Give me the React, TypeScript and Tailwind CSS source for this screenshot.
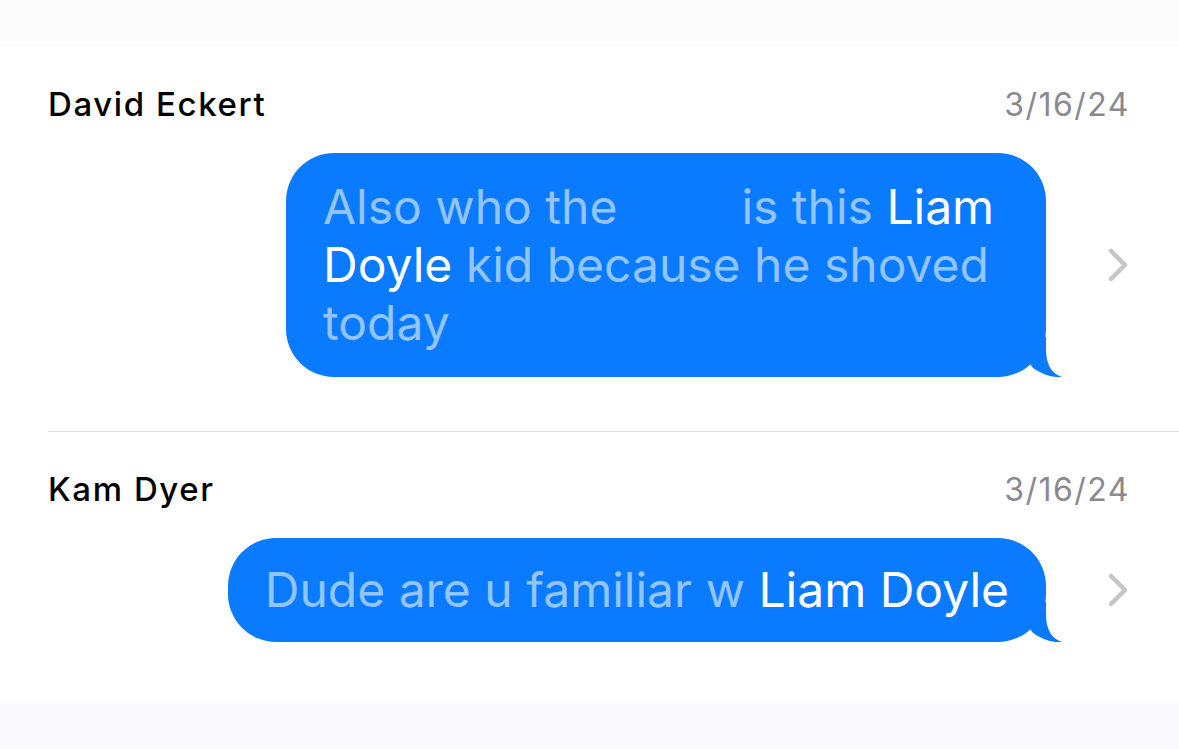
import React from "react";

const light = "text-[#92c4ff]";

function Chevron() {
  return (
    <svg width="24" height="36" viewBox="0 0 24 36" className="shrink-0">
      <path
        d="M5 4 L19 18 L5 32"
        fill="none"
        stroke="#c6c6c9"
        strokeWidth="4.5"
        strokeLinecap="round"
        strokeLinejoin="round"
      />
    </svg>
  );
}

function Tail() {
  return (
    <svg
      width="40"
      height="40"
      viewBox="0 0 40 40"
      className="absolute right-[-16px] bottom-0"
    >
      <path
        d="M24 0 L24 12 C24 28 30 37 40 40 C32 41 20 38 10 30 L0 10 L0 0 Z"
        fill="#0a7aff"
      />
    </svg>
  );
}

function Bubble({ children, className }: { children: React.ReactNode; className: string }) {
  return (
    <div className={`relative bg-[#0a7aff] rounded-[48px] text-[48px] leading-[58px] ${className}`}>
      {children}
      <Tail />
    </div>
  );
}

function Thread({
  name,
  date,
  children,
}: {
  name: string;
  date: string;
  children: React.ReactNode;
}) {
  return (
    <div className="pl-12">
      <div className="flex items-center justify-between pr-[49px] h-10">
        <span className="text-[33px] font-medium tracking-[1.6px] text-black">{name}</span>
        <span className="text-[32px] tracking-[1.5px] text-[#8a8a8e]">{date}</span>
      </div>
      <div className="flex items-center justify-end gap-[60px] pr-[49px] mt-7">
        {children}
        <Chevron />
      </div>
    </div>
  );
}

export default function App() {
  return (
    <div className="w-[1179px] h-[749px] bg-white flex flex-col overflow-hidden font-['Inter','Liberation_Sans',sans-serif]">
      <div className="h-[47px] bg-[#fcfcfd]" />
      <div className="flex-1 pt-[38px]">
        <Thread name="David Eckert" date="3/16/24">
          <Bubble className={`w-[760px] pl-[37px] pr-6 py-[25px] ${light}`}>
            Also who the <span className="inline-block w-[97px]" /> is this{" "}
            <span className="text-white">Liam</span>
            <br />
            <span className="text-white">Doyle</span> kid because he shoved
            <br />
            today
          </Bubble>
        </Thread>
        <div className="ml-12 mt-[54px] h-px bg-[#dcdcde]" />
        <div className="pt-[38px]">
          <Thread name="Kam Dyer" date="3/16/24">
            <Bubble className={`px-[37px] py-[23px] whitespace-nowrap ${light}`}>
              Dude are u familiar w <span className="text-white">Liam Doyle</span>
            </Bubble>
          </Thread>
        </div>
      </div>
      <div className="h-[46px] bg-[#fafafc]" />
    </div>
  );
}
